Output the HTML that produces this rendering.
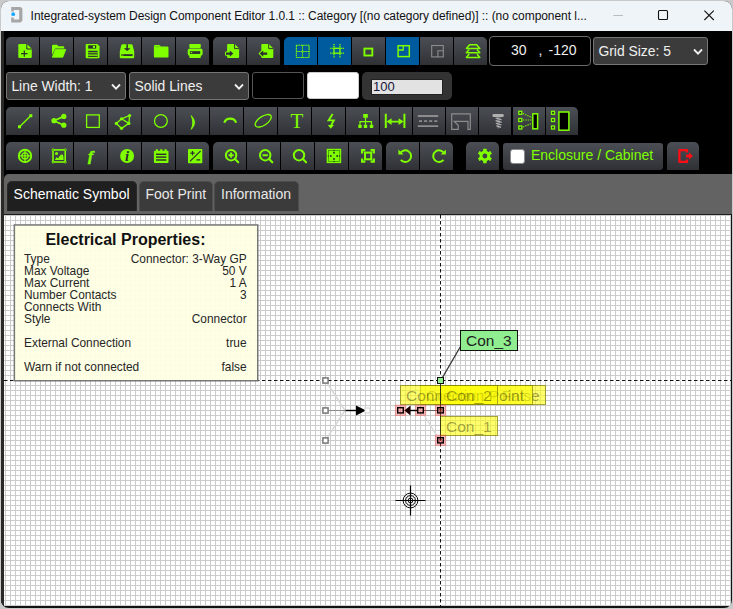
<!DOCTYPE html><html lang="en"><head><meta charset="utf-8"><title>Integrated-system Design Component Editor</title><style>
*{box-sizing:border-box;margin:0;padding:0}
html,body{width:733px;height:609px;overflow:hidden}
body{background:#c9c9c9;font-family:"Liberation Sans",sans-serif;position:relative}
#win{position:absolute;left:1px;top:1px;width:731px;height:607px;border-radius:8px;overflow:hidden;background:#000}
#win>*{position:absolute}
#title{left:0;top:0;width:731px;height:30px;background:#eff4f9}
#title .t{position:absolute;left:29.6px;top:7px;font-size:12px;line-height:16px;color:#111;white-space:nowrap;letter-spacing:-0.052px}
#lb{left:0;top:30px;width:3px;height:577px;background:#2a2927}
.b{position:absolute;height:28px;background:linear-gradient(#4b4f55,#2f3135);}
.b svg{position:absolute;left:0;top:0;overflow:visible}
.b.on{background:#005a9e}
.tl{border-top-left-radius:5px}.tr{border-top-right-radius:5px}
.sel{position:absolute;height:28px;background:#3b3b3b;border:1px solid #767676;border-radius:3px;color:#f0f0f0;font-size:13.9px;line-height:26px;padding-left:4.4px;white-space:nowrap}
.sel svg{position:absolute;right:4px;top:9.5px}
#coord{position:absolute;left:488px;top:35px;width:102px;height:30px;border:1px solid #6a6a6a;border-radius:4px;background:#000;color:#f0f0f0;font-size:14px;line-height:26px;white-space:nowrap}
#coord span{position:absolute;top:0}
#strip{left:3px;top:173px;width:728px;height:40px;background:#636363;border-top-left-radius:5px}
.tab{position:absolute;top:7px;height:30px;background:#3b3b3b;border:1px solid #4d4d4d;border-bottom:none;border-radius:5px 5px 0 0;color:#e8e8e8;font-size:14px;line-height:24px;padding-left:6px;white-space:nowrap}
.tab.act{background:#1f1f1f;border-color:#2a2a2a;color:#fff}
#canvas{left:3px;top:213px;width:728px;height:394px;background-color:#fff;border-top:1px solid #1c1c1c;border-right:1px solid #111;border-bottom:2px solid #111;
 background-image:linear-gradient(to right,#cbcbcb 1px,transparent 1px),linear-gradient(to bottom,#cbcbcb 1px,transparent 1px);background-size:5px 5px;background-position:1px 0px}
#canvas>*{position:absolute}
#props{width:245px;height:158px;color:#262626;font-size:11.9px;line-height:12px}
#props h3{position:absolute;left:0;top:7px;width:100%;font-size:16px;line-height:18px;font-weight:bold;color:#111;white-space:nowrap}
#props .r{position:absolute;left:10px;right:12.4px;height:12px;white-space:nowrap}
#props .r b{font-weight:normal;position:absolute;right:0;top:0}
.lab{position:absolute;height:20px;font-size:15.5px;line-height:19px;white-space:nowrap}
</style></head><body>
<div id="win">
<div id="title">
<svg style="position:absolute;left:9px;top:5px" width="16" height="20" viewBox="0 0 16 20"><path d="M1.2 1 H9.6 Q12.4 1 12.4 3.8 V13.6 Q12.4 16.4 9.6 16.4 H1.2 V11.4 H3.8 V13.4 H9.2 V4 H3.8 V5.6 H1.2 Z" fill="#a6a6a6"/><circle cx="3.2" cy="8.2" r="1.9" fill="#1aa7ff"/></svg>
<div class="t">Integrated-system Design Component Editor 1.0.1 :: Category [(no category defined)] :: (no component l...</div>
<svg style="position:absolute;left:600px;top:0" width="131" height="30" viewBox="0 0 131 30"><path d="M12.3 14.5 H22" stroke="#b9bcc0" stroke-width="1"/><rect x="57.5" y="9.5" width="9" height="9" rx="1" fill="none" stroke="#111" stroke-width="1.1"/><path d="M103.4 9.6 L112.8 19 M112.8 9.6 L103.4 19" stroke="#111" stroke-width="1.1"/></svg>
</div>
<div id="lb"></div>
<div class="b tl" style="left:5px;top:36px;width:33px;height:28px"><svg width="33" height="28" viewBox="6 37 33 28"><path d="M18.3 45.2 Q18.3 44 19.5 44 H27 L31.8 48.8 V56.8 Q31.8 58 30.6 58 H19.5 Q18.3 58 18.3 56.8 Z" fill="#7fff00"/><path d="M26.8 44 V49 H31.8" fill="none" stroke="#2b2d31" stroke-width="1"/><path d="M24.3 50.4 V56.8 M21.1 53.6 H27.5" stroke="#2b2d31" stroke-width="1.2"/></svg></div>
<div class="b " style="left:39px;top:36px;width:33px;height:28px"><svg width="33" height="28" viewBox="40 37 33 28"><path d="M52 46 Q52 44.8 53.2 44.8 H57 L58.5 46.2 H63.2 Q64.2 46.2 64.2 47.2 V48.6 H55.2 L52 55 Z" fill="#7fff00"/><path d="M55.4 49.4 H65.8 L62.8 57.2 H52.3 Z" fill="#7fff00" stroke="#7fff00" stroke-width="0.8" stroke-linejoin="round"/></svg></div>
<div class="b " style="left:73px;top:36px;width:33px;height:28px"><svg width="33" height="28" viewBox="74 37 33 28"><path d="M85.7 45 Q85.7 44 86.7 44 H97.3 L99.5 46.2 V57.2 Q99.5 58.2 98.5 58.2 H86.7 Q85.7 58.2 85.7 57.2 Z" fill="#7fff00"/><rect x="88.2" y="45.3" width="8" height="3.3" fill="#2b2d31"/><rect x="92.9" y="45.9" width="2.1" height="2.1" fill="#7fff00"/><rect x="88.2" y="50.8" width="9.4" height="7.4" fill="#2b2d31"/><rect x="88.2" y="52.3" width="9.4" height="0.9" fill="#7fff00"/><rect x="88.2" y="54.3" width="9.4" height="1.8" fill="#7fff00" opacity="0.8"/><rect x="88.2" y="57" width="9.4" height="1.2" fill="#7fff00"/></svg></div>
<div class="b " style="left:107px;top:36px;width:33px;height:28px"><svg width="33" height="28" viewBox="108 37 33 28"><path d="M122.6 44.2 H131.4 Q132.3 44.2 132.6 45.1 L134.2 51.6 V57.2 Q134.2 58.3 133.1 58.3 H120.9 Q119.8 58.3 119.8 57.2 V51.6 L121.4 45.1 Q121.7 44.2 122.6 44.2 Z" fill="#7fff00"/><path d="M126.4 44.2 H127.9 V48.2 H130.6 L127.15 51 L123.7 48.2 H126.4 Z" fill="#2b2d31"/><rect x="121.4" y="54.2" width="11.2" height="1.8" fill="#2b2d31"/><rect x="122.2" y="54.6" width="1.2" height="1" fill="#7fff00"/></svg></div>
<div class="b " style="left:141px;top:36px;width:33px;height:28px"><svg width="33" height="28" viewBox="142 37 33 28"><path d="M153.9 46.2 Q153.9 45 155.1 45 H159.4 L160.9 46.6 H167.3 Q168.5 46.6 168.5 47.8 V56.4 Q168.5 57.6 167.3 57.6 H155.1 Q153.9 57.6 153.9 56.4 Z" fill="#7fff00"/><path d="M154.6 46.7 H159.6" stroke="#5fc400" stroke-width="0.8"/></svg></div>
<div class="b tr" style="left:175px;top:36px;width:33px;height:28px"><svg width="33" height="28" viewBox="176 37 33 28"><rect x="189.3" y="43.9" width="11.5" height="4" rx="0.8" fill="#7fff00"/><rect x="187.7" y="48.5" width="14.9" height="7.3" rx="2" fill="#7fff00"/><rect x="189.3" y="54" width="11.5" height="4.1" rx="0.8" fill="#7fff00"/><rect x="189.9" y="51.2" width="10.3" height="2.7" fill="#2b2d31"/><rect x="190.7" y="52" width="1.5" height="1.1" fill="#7fff00"/></svg></div>
<div class="b tl" style="left:212px;top:36px;width:33px;height:28px"><svg width="33" height="28" viewBox="213 37 33 28"><path d="M227.1 45 Q227.1 44 228.1 44 H234.7 L239.1 48.4 V57 Q239.1 58 238.1 58 H228.1 Q227.1 58 227.1 57 Z" fill="#7fff00"/><path d="M234.5 44 V48.6 H239.1" fill="none" stroke="#2b2d31" stroke-width="0.9"/><path d="M226 52.4 H229.8 V50.5 L233.3 53.6 L229.8 56.7 V54.8 H226 Z" fill="#2b2d31" stroke="#7fff00" stroke-width="2" paint-order="stroke" stroke-linejoin="round"/></svg></div>
<div class="b tr" style="left:246px;top:36px;width:33px;height:28px"><svg width="33" height="28" viewBox="247 37 33 28"><path d="M261.3 45 Q261.3 44 262.3 44 H268.90000000000003 L273.3 48.4 V57 Q273.3 58 272.3 58 H262.3 Q261.3 58 261.3 57 Z" fill="#7fff00"/><path d="M268.7 44 V48.6 H273.3" fill="none" stroke="#2b2d31" stroke-width="0.9"/><path d="M267.2 52.4 H263.2 V50.5 L259.7 53.6 L263.2 56.7 V54.8 H267.2 Z" fill="#2b2d31" stroke="#7fff00" stroke-width="2" paint-order="stroke" stroke-linejoin="round"/></svg></div>
<div class="b on tl" style="left:283px;top:36px;width:33px;height:28px"><svg width="33" height="28" viewBox="284 37 33 28"><path d="M296.4 45.2 H309.1 V57.5 H296.4 Z M302.5 45.2 V57.5 M296.4 51.5 H309.1" stroke="#7fff00" stroke-width="1.1" fill="none" opacity="0.4"/><path d="M296.4 45.2 H309.1 V57.5 H296.4 Z M302.5 45.2 V57.5 M296.4 51.5 H309.1" stroke="#7fff00" stroke-width="1.1" stroke-dasharray="1.1 1.2" fill="none"/></svg></div>
<div class="b on" style="left:317px;top:36px;width:33px;height:28px"><svg width="33" height="28" viewBox="318 37 33 28"><path d="M334 43.9 V47.5 M334 54 V58 M340 43.9 V47.5 M340 54 V58 M330.2 48.3 H333.5 M340.6 48.3 H344 M330.2 53.2 H333.5 M340.6 53.2 H344" stroke="#7fff00" stroke-width="1.1" fill="none" opacity="0.35"/><path d="M334 43.9 V47.5 M334 54 V58 M340 43.9 V47.5 M340 54 V58 M330.2 48.3 H333.5 M340.6 48.3 H344 M330.2 53.2 H333.5 M340.6 53.2 H344" stroke="#7fff00" stroke-width="1.2" stroke-dasharray="1.1 1.1" fill="none"/><rect x="334" y="48.3" width="6" height="4.9" fill="none" stroke="#7fff00" stroke-width="1.4"/></svg></div>
<div class="b " style="left:351px;top:36px;width:33px;height:28px"><svg width="33" height="28" viewBox="352 37 33 28"><rect x="364.4" y="48.6" width="7.9" height="6.9" fill="none" stroke="#7fff00" stroke-width="1.9"/></svg></div>
<div class="b on" style="left:385px;top:36px;width:33px;height:28px"><svg width="33" height="28" viewBox="386 37 33 28"><rect x="398.1" y="45.7" width="11.2" height="10.9" fill="none" stroke="#7fff00" stroke-width="1.5"/><path d="M403.2 45.7 V50 H398.1" fill="none" stroke="#7fff00" stroke-width="1.3"/></svg></div>
<div class="b " style="left:419px;top:36px;width:33px;height:28px"><svg width="33" height="28" viewBox="420 37 33 28"><rect x="431.7" y="45.5" width="11.6" height="11.4" fill="none" stroke="#8c8c8c" stroke-width="1.1"/><path d="M437.9 56.9 V50.8 H443.3" fill="none" stroke="#8c8c8c" stroke-width="1.1"/></svg></div>
<div class="b tr" style="left:453px;top:36px;width:33px;height:28px"><svg width="33" height="28" viewBox="454 37 33 28"><path d="M469.6 44.7 H476.6 L479.8 48.5 H466.4 Z" fill="none" stroke="#7fff00" stroke-width="1.5" stroke-linejoin="round"/><path d="M469.2 49.6 L466.4 52.8 H479.8 L477 49.6" fill="none" stroke="#7fff00" stroke-width="1.5" stroke-linejoin="round"/><path d="M469.2 54 L466.4 57.4 H479.8 L477 54" fill="none" stroke="#7fff00" stroke-width="1.5" stroke-linejoin="round"/></svg></div>
<div id="coord"><span style="left:21px">30</span><span style="left:48.6px">,</span><span style="left:58.6px">-120</span></div>
<div class="sel" style="left:592px;top:36px;width:115px">Grid Size: 5<svg width="10" height="8" viewBox="0 0 10 8"><path d="M1 1.5 L5 5.6 L9 1.5" fill="none" stroke="#f0f0f0" stroke-width="1.8"/></svg></div>
<div class="sel" style="left:5px;top:71px;width:120px">Line Width: 1<svg width="10" height="8" viewBox="0 0 10 8"><path d="M1 1.5 L5 5.6 L9 1.5" fill="none" stroke="#f0f0f0" stroke-width="1.8"/></svg></div>
<div class="sel" style="left:128px;top:71px;width:120px">Solid Lines<svg width="10" height="8" viewBox="0 0 10 8"><path d="M1 1.5 L5 5.6 L9 1.5" fill="none" stroke="#f0f0f0" stroke-width="1.8"/></svg></div>
<div style="left:251px;top:71px;width:52px;height:27px;background:#000;border:1px solid #555;border-radius:3px"></div>
<div style="left:306px;top:71px;width:51.5px;height:27px;background:#fff;border:1px solid #ccc;border-radius:3px"></div>
<div style="left:361px;top:71px;width:90px;height:28px;background:#333;border-radius:5px"><div style="position:absolute;left:9px;top:6.5px;width:72px;height:16px;background:#e2e2e2;border:1px solid #222;color:#16163a;font-size:13px;line-height:14px;padding-left:1px">100</div></div>
<div class="b tl" style="left:5px;top:106px;width:33px;height:28px"><svg width="33" height="28" viewBox="6 107 33 28"><path d="M19.5 126.7 L30.8 115.7" stroke="#7fff00" stroke-width="1.4"/><rect x="18" y="125.3" width="3" height="3" fill="#7fff00"/><rect x="29.3" y="114.2" width="3" height="3" fill="#7fff00"/></svg></div>
<div class="b " style="left:39px;top:106px;width:33px;height:28px"><svg width="33" height="28" viewBox="40 107 33 28"><path d="M63.8 116.4 L54 120.7 L63.8 125.2" fill="none" stroke="#7fff00" stroke-width="1.7"/><circle cx="54" cy="120.7" r="2.6" fill="#7fff00"/><circle cx="63.8" cy="116.4" r="2.6" fill="#7fff00"/><circle cx="63.8" cy="125.2" r="2.6" fill="#7fff00"/></svg></div>
<div class="b " style="left:73px;top:106px;width:33px;height:28px"><svg width="33" height="28" viewBox="74 107 33 28"><rect x="86.6" y="114.9" width="12.7" height="12.5" fill="none" stroke="#7fff00" stroke-width="1.3"/></svg></div>
<div class="b " style="left:107px;top:106px;width:33px;height:28px"><svg width="33" height="28" viewBox="108 107 33 28"><path d="M116.3 123.4 L121.5 118.8 L129.6 115.5 L128.9 123.4 L121.5 128.3 Z M121.5 118.8 L128.9 123.4" fill="none" stroke="#7fff00" stroke-width="1.3"/><circle cx="116.3" cy="123.4" r="1.6" fill="#7fff00"/><circle cx="121.5" cy="118.8" r="1.6" fill="#7fff00"/><circle cx="129.6" cy="115.5" r="1.6" fill="#7fff00"/><circle cx="128.9" cy="123.4" r="1.6" fill="#7fff00"/><circle cx="121.5" cy="128.3" r="1.6" fill="#7fff00"/></svg></div>
<div class="b " style="left:141px;top:106px;width:33px;height:28px"><svg width="33" height="28" viewBox="142 107 33 28"><circle cx="160.9" cy="121" r="6.4" fill="none" stroke="#7fff00" stroke-width="1.3"/></svg></div>
<div class="b " style="left:175px;top:106px;width:33px;height:28px"><svg width="33" height="28" viewBox="176 107 33 28"><path d="M191.2 115.6 Q198 122.5 191.2 129.4 Q194.4 122.5 191.2 115.6 Z" fill="#7fff00" stroke="#7fff00" stroke-width="0.9" stroke-linejoin="round"/></svg></div>
<div class="b " style="left:209px;top:106px;width:33px;height:28px"><svg width="33" height="28" viewBox="210 107 33 28"><path d="M224.3 122.8 A6.1 5.6 0 0 1 236.1 122.8" fill="none" stroke="#7fff00" stroke-width="2.1"/></svg></div>
<div class="b " style="left:243px;top:106px;width:33px;height:28px"><svg width="33" height="28" viewBox="244 107 33 28"><ellipse cx="263.2" cy="120.8" rx="9.2" ry="4.4" transform="rotate(-34 263.2 120.8)" fill="none" stroke="#7fff00" stroke-width="1.3"/></svg></div>
<div class="b " style="left:277px;top:106px;width:33px;height:28px"><svg width="33" height="28" viewBox="278 107 33 28"><text x="297" y="128" text-anchor="middle" font-family="Liberation Serif,serif" font-size="21" fill="#7fff00">T</text></svg></div>
<div class="b " style="left:311px;top:106px;width:33px;height:28px"><svg width="33" height="28" viewBox="312 107 33 28"><path d="M332.6 113.9 L328.6 120.4 H333.8 L331 125.6" fill="none" stroke="#7fff00" stroke-width="1.9" stroke-linejoin="miter"/><path d="M327.9 124.9 H334 L330.7 128.7 Z" fill="#7fff00"/></svg></div>
<div class="b " style="left:345px;top:106px;width:33px;height:28px"><svg width="33" height="28" viewBox="346 107 33 28"><rect x="363.2" y="114" width="4.6" height="3.8" fill="#7fff00"/><path d="M365.5 117.5 V121.6 M360 125.4 V121.6 H371.5 V125.4 M365.5 121.6 V125.4" fill="none" stroke="#7fff00" stroke-width="1.2"/><rect x="358.3" y="124.7" width="3.4" height="3.2" rx="0.5" fill="#7fff00"/><rect x="363.8" y="124.7" width="3.4" height="3.2" rx="0.5" fill="#7fff00"/><rect x="369.8" y="124.7" width="3.4" height="3.2" rx="0.5" fill="#7fff00"/></svg></div>
<div class="b " style="left:379px;top:106px;width:32px;height:28px"><svg width="32" height="28" viewBox="380 107 32 28"><path d="M385.8 113.8 V128 M404.4 113.8 V128" stroke="#7fff00" stroke-width="2"/><path d="M389 121.6 H401" stroke="#7fff00" stroke-width="1.6"/><path d="M386.6 121.6 L391.6 118.2 V125 Z M403.6 121.6 L398.6 118.2 V125 Z" fill="#7fff00"/></svg></div>
<div class="b " style="left:412px;top:106px;width:32px;height:28px"><svg width="32" height="28" viewBox="413 107 32 28"><path d="M417.8 116 H438.2 M417.8 126.2 H438.2" stroke="#8c8c8c" stroke-width="1.8"/><path d="M419 121.1 H438" stroke="#8c8c8c" stroke-width="1.8" stroke-dasharray="3 2.1"/></svg></div>
<div class="b " style="left:445px;top:106px;width:32px;height:28px"><svg width="32" height="28" viewBox="446 107 32 28"><path d="M451.7 113.9 H470.3 V129.3 H468 V121.3 H454.2 L458.2 125.2 V129.3 H451.7 Z" fill="none" stroke="#8c8c8c" stroke-width="1.2"/></svg></div>
<div class="b " style="left:478px;top:106px;width:32px;height:28px"><svg width="32" height="28" viewBox="479 107 32 28"><rect x="492.5" y="114.1" width="11.2" height="3" rx="1" fill="#b0b0b0"/><path d="M496.6 117 L497.6 128.4 H499 L500.6 117 Z" fill="#6f7074"/><path d="M495.6 118 L501.6 119.8 M495.6 120.6 L501.6 122.4 M495.8 123.2 L501.4 125 M496.2 125.8 L501 127.4" stroke="#b4b4b4" stroke-width="1.2"/></svg></div>
<div class="b " style="left:512px;top:106px;width:32px;height:28px"><svg width="32" height="28" viewBox="513 107 32 28"><rect x="518.8000000000001" y="111.3" width="3" height="3" fill="#1d1f22" stroke="#7fff00" stroke-width="1.3"/><rect x="518.8000000000001" y="118.5" width="3" height="3" fill="#1d1f22" stroke="#7fff00" stroke-width="1.3"/><rect x="518.8000000000001" y="126.0" width="3" height="3" fill="#1d1f22" stroke="#7fff00" stroke-width="1.3"/><path d="M523 113.4 L532 117.6 M523 120 H532 M523 127 L532 123.2" stroke="#7fff00" stroke-width="1.1" stroke-dasharray="1.3 1.1" fill="none"/><rect x="532.8" y="113.8" width="4.8" height="15" fill="#000" stroke="#7fff00" stroke-width="1.5"/></svg></div>
<div class="b tr" style="left:545px;top:106px;width:32px;height:28px"><svg width="32" height="28" viewBox="546 107 32 28"><rect x="551.5" y="111.3" width="3" height="3" fill="#1d1f22" stroke="#7fff00" stroke-width="1.3"/><rect x="551.5" y="118.5" width="3" height="3" fill="#1d1f22" stroke="#7fff00" stroke-width="1.3"/><rect x="551.5" y="126.0" width="3" height="3" fill="#1d1f22" stroke="#7fff00" stroke-width="1.3"/><rect x="558.9" y="112" width="10" height="18.2" fill="#000" stroke="#7fff00" stroke-width="1.5"/></svg></div>
<div class="b tl" style="left:5px;top:141px;width:33px;height:28px"><svg width="33" height="28" viewBox="6 142 33 28"><circle cx="25" cy="155.9" r="6.2" fill="none" stroke="#7fff00" stroke-width="1.9"/><circle cx="25" cy="155.9" r="3.1" fill="none" stroke="#7fff00" stroke-width="1.3"/><path d="M25 149 V162.8 M18.1 155.9 H31.9" stroke="#7fff00" stroke-width="1.4"/></svg></div>
<div class="b " style="left:39px;top:141px;width:33px;height:28px"><svg width="33" height="28" viewBox="40 142 33 28"><rect x="53" y="149.9" width="12.2" height="12.1" fill="none" stroke="#7fff00" stroke-width="1.6"/><circle cx="53" cy="149.9" r="1.4" fill="#7fff00"/><circle cx="53" cy="149.9" r="0.6" fill="#2c2e32"/><circle cx="65.2" cy="149.9" r="1.4" fill="#7fff00"/><circle cx="65.2" cy="149.9" r="0.6" fill="#2c2e32"/><circle cx="53" cy="162" r="1.4" fill="#7fff00"/><circle cx="53" cy="162" r="0.6" fill="#2c2e32"/><circle cx="65.2" cy="162" r="1.4" fill="#7fff00"/><circle cx="65.2" cy="162" r="0.6" fill="#2c2e32"/><circle cx="56.5" cy="153.6" r="1.5" fill="#7fff00"/><path d="M54.8 160 L56.6 157 L58.2 158.6 Q60.4 153.6 62.6 154.6 Q63.6 155.4 63.6 160 Z" fill="#7fff00"/></svg></div>
<div class="b " style="left:73px;top:141px;width:33px;height:28px"><svg width="33" height="28" viewBox="74 142 33 28"><text x="90.6" y="161" text-anchor="middle" font-family="Liberation Serif,serif" font-style="italic" font-weight="bold" font-size="15.5" fill="#7fff00" stroke="#7fff00" stroke-width="0.5">f</text></svg></div>
<div class="b " style="left:107px;top:141px;width:33px;height:28px"><svg width="33" height="28" viewBox="108 142 33 28"><circle cx="127.1" cy="156" r="7" fill="#7fff00"/><text x="127" y="161.2" text-anchor="middle" font-family="Liberation Serif,serif" font-style="italic" font-weight="bold" font-size="14.5" fill="#2b2d31">i</text></svg></div>
<div class="b " style="left:141px;top:141px;width:33px;height:28px"><svg width="33" height="28" viewBox="142 142 33 28"><path d="M153.9 151.8 Q153.9 150.8 154.9 150.8 H155.8 V149.3 H158 V150.8 H160.2 V149.3 H162.4 V150.8 H164.5 V149.3 H166.7 V150.8 H167.5 Q168.5 150.8 168.5 151.8 V162 Q168.5 163 167.5 163 H154.9 Q153.9 163 153.9 162 Z" fill="#7fff00"/><rect x="156" y="153.6" width="10.4" height="1.4" fill="#2b2d31"/><rect x="156" y="156.4" width="10.4" height="1.4" fill="#2b2d31"/><rect x="156" y="159.3" width="10.4" height="1.4" fill="#2b2d31"/></svg></div>
<div class="b tr" style="left:175px;top:141px;width:33px;height:28px"><svg width="33" height="28" viewBox="176 142 33 28"><rect x="188" y="149" width="14.3" height="14.3" rx="0.8" fill="#7fff00"/><path d="M190 161.4 L200.6 150.8" stroke="#2b2d31" stroke-width="1.2"/><path d="M190.4 153.2 H194.6 M192.5 151.1 V155.3 M196.4 159.8 H200.2" stroke="#2b2d31" stroke-width="1.3"/></svg></div>
<div class="b tl" style="left:212px;top:141px;width:33px;height:28px"><svg width="33" height="28" viewBox="213 142 33 28"><circle cx="231.1" cy="155.2" r="5.2" fill="none" stroke="#7fff00" stroke-width="2"/><path d="M235.0 159.1 L238.2 162.3" stroke="#7fff00" stroke-width="2.1" stroke-linecap="round"/><path d="M228.5 155.2 H233.7 M231.1 152.6 V157.8" stroke="#7fff00" stroke-width="1.9"/></svg></div>
<div class="b " style="left:246px;top:141px;width:33px;height:28px"><svg width="33" height="28" viewBox="247 142 33 28"><circle cx="265.2" cy="155.2" r="5.2" fill="none" stroke="#7fff00" stroke-width="2"/><path d="M269.09999999999997 159.1 L272.3 162.3" stroke="#7fff00" stroke-width="2.1" stroke-linecap="round"/><path d="M262.6 155.2 H267.8" stroke="#7fff00" stroke-width="1.9"/></svg></div>
<div class="b " style="left:280px;top:141px;width:33px;height:28px"><svg width="33" height="28" viewBox="281 142 33 28"><circle cx="299" cy="155.2" r="5.2" fill="none" stroke="#7fff00" stroke-width="2"/><path d="M302.9 159.1 L306.1 162.3" stroke="#7fff00" stroke-width="2.1" stroke-linecap="round"/></svg></div>
<div class="b " style="left:314px;top:141px;width:33px;height:28px"><svg width="33" height="28" viewBox="315 142 33 28"><rect x="326.7" y="148.8" width="14.5" height="14.3" fill="#7fff00"/><rect x="328.4" y="150.5" width="11.3" height="11" fill="none" stroke="#3f8a06" stroke-width="0.7"/><circle cx="334.0" cy="152.85" r="1" fill="#27401a"/><circle cx="334.0" cy="150.45" r="0.75" fill="#27401a"/><circle cx="334.0" cy="159.04999999999998" r="1" fill="#27401a"/><circle cx="334.0" cy="161.45" r="0.75" fill="#27401a"/><circle cx="330.8" cy="155.95" r="1" fill="#27401a"/><circle cx="328.4" cy="155.95" r="0.75" fill="#27401a"/><circle cx="337.2" cy="155.95" r="1" fill="#27401a"/><circle cx="339.6" cy="155.95" r="0.75" fill="#27401a"/></svg></div>
<div class="b tr" style="left:348px;top:141px;width:33px;height:28px"><svg width="33" height="28" viewBox="349 142 33 28"><path d="M362.1 153.39999999999998 V150.2 H365.3 M370.6 150.2 H373.8 V153.39999999999998 M373.8 158.5 V161.7 H370.6 M365.3 161.7 H362.1 V158.5" fill="none" stroke="#7fff00" stroke-width="2.2"/><rect x="365" y="152.6" width="6.2" height="6.7" fill="none" stroke="#7fff00" stroke-width="2"/></svg></div>
<div class="b tl" style="left:385px;top:141px;width:33px;height:28px"><svg width="33" height="28" viewBox="386 142 33 28"><path d="M400.2 153.4 A5.8 5.8 0 1 1 400.8 159.8" fill="none" stroke="#7fff00" stroke-width="2" transform="rotate(0)"/><path d="M398.4 149.6 L403.6 154.6 H398.4 Z" fill="#7fff00"/></svg></div>
<div class="b tr" style="left:419px;top:141px;width:33px;height:28px"><svg width="33" height="28" viewBox="420 142 33 28"><path d="M444.1 153.4 A5.8 5.8 0 1 0 443.5 159.8" fill="none" stroke="#7fff00" stroke-width="2"/><path d="M445.9 149.6 L440.7 154.6 H445.9 Z" fill="#7fff00"/></svg></div>
<div class="b tl tr" style="left:465px;top:141px;width:33px;height:28px"><svg width="33" height="28" viewBox="466 142 33 28"><circle cx="484.9" cy="156" r="3.9" fill="none" stroke="#7fff00" stroke-width="3"/><rect x="483.2" y="148.8" width="3.4" height="3" rx="0.5" fill="#7fff00" transform="rotate(0 484.9 156)"/><rect x="483.2" y="148.8" width="3.4" height="3" rx="0.5" fill="#7fff00" transform="rotate(60 484.9 156)"/><rect x="483.2" y="148.8" width="3.4" height="3" rx="0.5" fill="#7fff00" transform="rotate(120 484.9 156)"/><rect x="483.2" y="148.8" width="3.4" height="3" rx="0.5" fill="#7fff00" transform="rotate(180 484.9 156)"/><rect x="483.2" y="148.8" width="3.4" height="3" rx="0.5" fill="#7fff00" transform="rotate(240 484.9 156)"/><rect x="483.2" y="148.8" width="3.4" height="3" rx="0.5" fill="#7fff00" transform="rotate(300 484.9 156)"/></svg></div>
<div class="b" style="left:502px;top:142px;width:160px;height:27px;border-radius:3px"><div style="position:absolute;left:7px;top:6px;width:15px;height:15px;background:#fff;border:1px solid #8a8a8a;border-radius:3px"></div><div style="position:absolute;left:28px;top:0;font-size:14px;line-height:24px;color:#7fff00;white-space:nowrap">Enclosure / Cabinet</div></div>
<div class="b tl tr" style="left:666px;top:141px;width:32px;height:28px"><svg width="32" height="28" viewBox="667 142 32 28"><path d="M687 152.6 V150.2 H679.4 V161.9 H687 V159.6" fill="none" stroke="#ff0d16" stroke-width="2.3" stroke-linejoin="round"/><path d="M686 154.4 H689 V152.2 L692.9 155.9 L689 159.6 V157.4 H686 Z" fill="#ff0d16"/></svg></div>
<div id="strip">
<div class="tab act" style="left:2.6px;width:130px">Schematic Symbol</div>
<div class="tab" style="left:134.5px;width:74.5px">Foot Print</div>
<div class="tab" style="left:210px;width:84.5px">Information</div>
</div>
<div id="canvas">
<svg width="727" height="391" viewBox="4 215 727 391" style="left:0;top:0"><path d="M440.5 215 V606" stroke="#fff" stroke-width="1"/><path d="M4 380.5 H731" stroke="#fff" stroke-width="1"/><path d="M440.5 215 V606" stroke="#111" stroke-width="1" stroke-dasharray="3.5 2.5"/><path d="M4 380.5 H731" stroke="#111" stroke-width="1" stroke-dasharray="3.5 2.5"/><path d="M325.5 380.5 L345 410.5 L325.5 440.5" fill="none" stroke="#d8d8d8" stroke-width="1.5"/><path d="M329 410.5 H345.5" stroke="#8a8a8a" stroke-width="1"/><path d="M345.5 410.5 H357" stroke="#000" stroke-width="1.4"/><path d="M356 405.6 L366 410.5 L356 415.4 Z" fill="#000"/><rect x="365" y="408" width="5" height="5" fill="#fff" stroke="#cfcfcf" stroke-width="1"/><rect x="322.9" y="377.9" width="5.2" height="5.2" fill="#fff" stroke="#777" stroke-width="1.5"/><rect x="322.9" y="407.9" width="5.2" height="5.2" fill="#fff" stroke="#777" stroke-width="1.5"/><rect x="322.9" y="437.9" width="5.2" height="5.2" fill="#fff" stroke="#777" stroke-width="1.5"/><path d="M423.5 414 L437.5 437" stroke="#dadada" stroke-width="1.4"/><path d="M424 410.5 H437" stroke="#666" stroke-width="1"/><path d="M460.5 346.5 L442.2 378" stroke="#333" stroke-width="1.3"/><rect x="437.5" y="377.5" width="6" height="6" fill="#90ee90" stroke="#111" stroke-width="1"/><rect x="14.35" y="224.95" width="243.4" height="155.8" fill="rgba(255,255,228,0.93)" stroke="#777" stroke-width="1.5"/></svg>
<div id="props" style="left:10px;top:9px">
<h3 style="left:31.4px">Electrical Properties:</h3>
<div class="r" style="top:29px">Type<b>Connector: 3-Way GP</b></div>
<div class="r" style="top:41px">Max Voltage<b>50 V</b></div>
<div class="r" style="top:53px">Max Current<b>1 A</b></div>
<div class="r" style="top:65px">Number Contacts<b>3</b></div>
<div class="r" style="top:77px">Connects With<b></b></div>
<div class="r" style="top:89px">Style<b>Connector</b></div>
<div class="r" style="top:113px">External Connection<b>true</b></div>
<div class="r" style="top:137px">Warn if not connected<b>false</b></div>
</div>
<div class="lab" style="left:416px;top:170px;width:125.5px;background:rgba(255,255,0,0.57);border:1px solid rgba(60,60,0,0.45);color:rgba(20,20,0,0.40);padding-left:5px;">Connector False</div>
<div class="lab" style="left:396px;top:170px;width:133px;background:rgba(255,255,0,0.57);border:1px solid rgba(60,60,0,0.45);color:rgba(20,20,0,0.40);padding-left:5px;">Connection Point</div>
<div class="lab" style="left:436px;top:170px;width:58px;background:rgba(255,255,0,0.57);border:1px solid rgba(60,60,0,0.45);color:rgba(20,20,0,0.42);padding-left:5px;">Con_2</div>
<div class="lab" style="left:436px;top:200.5px;width:58px;background:rgba(255,255,0,0.57);border:1px solid rgba(60,60,0,0.45);color:rgba(20,20,0,0.40);padding-left:5px;">Con_1</div>
<div class="lab" style="left:456px;top:115px;width:58px;background:#90ee90;border:1px solid #111;color:#222;padding-left:5px;height:21px;line-height:19px">Con_3</div>
<svg width="727" height="391" viewBox="4 215 727 391" style="left:0;top:0"><path d="M440.5 384 V437" stroke="#3a3a10" stroke-width="1"/><rect x="394.9" y="404.6" width="11.3" height="11.4" fill="rgba(255,40,40,0.33)"/><rect x="414.9" y="404.6" width="11.3" height="11.4" fill="rgba(255,40,40,0.33)"/><rect x="434.9" y="404.6" width="11.3" height="11.4" fill="rgba(255,40,40,0.33)"/><rect x="434.9" y="434.6" width="11.3" height="11.4" fill="rgba(255,40,40,0.33)"/><path d="M410 410.5 H417.5" stroke="#000" stroke-width="1.4"/><path d="M404.4 410.5 L410.5 405.6 V415.4 Z" fill="#1a0000"/><rect x="397.7" y="407.7" width="5.6" height="5.2" fill="none" stroke="#000" stroke-width="1.4"/><rect x="417.7" y="407.7" width="5.6" height="5.2" fill="none" stroke="#000" stroke-width="1.4"/><rect x="437.7" y="407.7" width="5.6" height="5.2" fill="none" stroke="#000" stroke-width="1.4"/><rect x="437.7" y="437.7" width="5.6" height="5.2" fill="none" stroke="#000" stroke-width="1.4"/><path d="M438.7 408.7 L442.3 411.90000000000003 M442.3 408.7 L438.7 411.90000000000003" stroke="#700" stroke-width="0.9" opacity="0.7"/><path d="M438.7 438.7 L442.3 441.90000000000003 M442.3 438.7 L438.7 441.90000000000003" stroke="#700" stroke-width="0.9" opacity="0.7"/><path d="M410.5 485.5 V515.5 M395.5 500.5 H425.5" stroke="#000" stroke-width="1.2"/><circle cx="410.5" cy="500.5" r="2.4" fill="none" stroke="#111" stroke-width="1"/><circle cx="410.5" cy="500.5" r="4.9" fill="none" stroke="#111" stroke-width="1"/><circle cx="410.5" cy="500.5" r="7.4" fill="none" stroke="#111" stroke-width="1"/></svg>
</div>
</div></body></html>
